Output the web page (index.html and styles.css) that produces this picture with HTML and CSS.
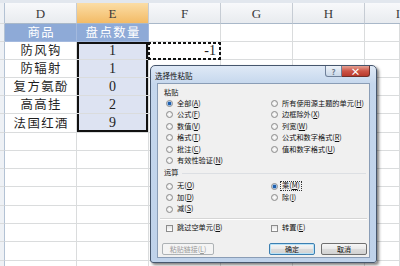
FILE: index.html
```html
<!DOCTYPE html>
<html lang="zh-CN">
<head>
    <meta charset="UTF-8">
    <title>选择性粘贴</title>
    <link rel="stylesheet" href="styles.css">
</head>
<body>

    <!-- Werkblad -->
    <div class="sheet">
        <div class="strip"></div>

        <div class="cell rh"></div>
        <div class="cell col">D</div>
        <div class="cell col on">E</div>
        <div class="cell col">F</div>
        <div class="cell col">G</div>
        <div class="cell col">H</div>
        <div class="cell col last-col">I</div>

        <div class="cell rh"></div>
        <div class="cell band">商品</div>
        <div class="cell band">盘点数量</div>
        <div class="cell"></div><div class="cell"></div><div class="cell"></div><div class="cell"></div>

        <div class="cell rh"></div>
        <div class="cell">防风钩</div>
        <div class="cell qty first">1</div>
        <div class="cell copy">-1</div>
        <div class="cell"></div><div class="cell"></div><div class="cell"></div>

        <div class="cell rh"></div>
        <div class="cell">防辐射</div>
        <div class="cell qty">1</div>
        <div class="cell"></div><div class="cell"></div><div class="cell"></div><div class="cell"></div>

        <div class="cell rh"></div>
        <div class="cell">复方氨酚</div>
        <div class="cell qty">0</div>
        <div class="cell"></div><div class="cell"></div><div class="cell"></div><div class="cell"></div>

        <div class="cell rh"></div>
        <div class="cell">高高挂</div>
        <div class="cell qty">2</div>
        <div class="cell"></div><div class="cell"></div><div class="cell"></div><div class="cell"></div>

        <div class="cell rh"></div>
        <div class="cell">法国红酒</div>
        <div class="cell qty last">9</div>
        <div class="cell"></div><div class="cell"></div><div class="cell"></div><div class="cell"></div>

        <div class="cell rh"></div><div class="cell"></div><div class="cell"></div><div class="cell"></div><div class="cell"></div><div class="cell"></div><div class="cell"></div>
        <div class="cell rh"></div><div class="cell"></div><div class="cell"></div><div class="cell"></div><div class="cell"></div><div class="cell"></div><div class="cell"></div>
        <div class="cell rh"></div><div class="cell"></div><div class="cell"></div><div class="cell"></div><div class="cell"></div><div class="cell"></div><div class="cell"></div>
        <div class="cell rh"></div><div class="cell"></div><div class="cell"></div><div class="cell"></div><div class="cell"></div><div class="cell"></div><div class="cell"></div>
        <div class="cell rh"></div><div class="cell"></div><div class="cell"></div><div class="cell"></div><div class="cell"></div><div class="cell"></div><div class="cell"></div>
        <div class="cell rh"></div><div class="cell"></div><div class="cell"></div><div class="cell"></div><div class="cell"></div><div class="cell"></div><div class="cell"></div>
        <div class="cell rh"></div><div class="cell"></div><div class="cell"></div><div class="cell"></div><div class="cell"></div><div class="cell"></div><div class="cell"></div>
        <div class="cell rh"></div><div class="cell"></div><div class="cell"></div><div class="cell"></div><div class="cell"></div><div class="cell"></div><div class="cell"></div>
    </div>

    <!-- Dialoogvenster -->
    <div class="dialog">
        <div class="titlebar">
            <span class="title">选择性粘贴</span>
            <div class="caption-btns">
                <span class="cbtn help">?</span>
                <span class="cbtn close">×</span>
            </div>
        </div>

        <div class="panel">
            <div class="group-label">粘贴</div>
            <div class="opts paste">
                <div class="opt"><span class="radio on"></span>全部(<u>A</u>)</div>
                <div class="opt"><span class="radio"></span>公式(<u>F</u>)</div>
                <div class="opt"><span class="radio"></span>数值(<u>V</u>)</div>
                <div class="opt"><span class="radio"></span>格式(<u>T</u>)</div>
                <div class="opt"><span class="radio"></span>批注(<u>C</u>)</div>
                <div class="opt"><span class="radio"></span>有效性验证(<u>N</u>)</div>
                <div class="opt"><span class="radio"></span>所有使用源主题的单元(<u>H</u>)</div>
                <div class="opt"><span class="radio"></span>边框除外(<u>X</u>)</div>
                <div class="opt"><span class="radio"></span>列宽(<u>W</u>)</div>
                <div class="opt"><span class="radio"></span>公式和数字格式(<u>R</u>)</div>
                <div class="opt"><span class="radio"></span>值和数字格式(<u>U</u>)</div>
            </div>

            <div class="group-label line">运算</div>
            <div class="opts ops">
                <div class="opt"><span class="radio"></span>无(<u>O</u>)</div>
                <div class="opt"><span class="radio"></span>加(<u>D</u>)</div>
                <div class="opt"><span class="radio"></span>减(<u>S</u>)</div>
                <div class="opt"><span class="radio on"></span><span class="focus">乘(<u>M</u>)</span></div>
                <div class="opt"><span class="radio"></span>除(<u>I</u>)</div>
            </div>

            <div class="separator"></div>

            <div class="checks">
                <div class="opt"><span class="checkbox"></span>跳过空单元(<u>B</u>)</div>
                <div class="opt"><span class="checkbox"></span>转置(<u>E</u>)</div>
            </div>

            <div class="buttons">
                <span class="btn disabled">粘贴链接(<u>L</u>)</span>
                <span class="btn default">确定</span>
                <span class="btn">取消</span>
            </div>
        </div>
    </div>

</body>
</html>
```

FILE: styles.css
```css
* {
    box-sizing: border-box;
}

body {
    margin: 0;
    width: 400px;
    height: 266px;
    overflow: hidden;
    position: relative;
    background-color: #fff;
    font-family: "Noto Sans CJK SC", sans-serif;
}

/* Werkblad */
.sheet {
    width: 400px;
    overflow: hidden;
    display: grid;
    grid-template-columns: 5px repeat(5, 72px) 35px;
    grid-template-rows: 3px 21px 18px 18px 18px 18px 18px 19px 18px 18px 18px 19px 18px 18px 19px 18px;
}

.strip {
    grid-column: 1 / -1;
    background-color: #e2e7ee;
}

.cell {
    border-right: 1px solid #dadcdd;
    border-bottom: 1px solid #dadcdd;
    display: flex;
    align-items: center;
    justify-content: center;
    font-size: 12.4px;
    letter-spacing: 1.4px;
    padding-left: 1.4px;
    line-height: 1;
    color: #1e1e1e;
    white-space: nowrap;
}

.rh {
    background-color: #eef1f5;
    border-right-color: #b3c2d4;
}

.col {
    background: linear-gradient(#f8f9fb, #e8ebef);
    border-right-color: #c6ccd4;
    border-bottom-color: #a9b8c9;
    font-family: "Liberation Serif", serif;
    font-size: 13px;
    letter-spacing: 0;
    padding-left: 0;
    color: #3a3a3a;
}

.col.on {
    background: linear-gradient(#fbdda6, #f3bb66);
}

.col.last-col {
    justify-content: flex-end;
    border-right: none;
}

.band {
    background-color: #8eaad7;
    color: #fff;
    border-right-color: #a3b9de;
    border-bottom-color: #a3b9de;
}

.qty {
    background-color: #dde3f2;
    font-family: "Liberation Serif", serif;
    font-size: 14px;
    letter-spacing: 0;
    padding-left: 0;
    box-shadow: inset 2px 0 #111, inset -2px 0 #111;
}

.qty.first {
    box-shadow: inset 2px 0 #111, inset -2px 0 #111, inset 0 2px #111;
}

.qty.last {
    box-shadow: inset 2px 0 #111, inset -2px 0 #111, inset 0 -2px #111;
}

/* kopieerkader (marching ants) */
.copy {
    position: relative;
    justify-content: flex-end;
    padding-left: 0;
    padding-right: 4px;
    letter-spacing: 0;
    font-family: "Liberation Serif", serif;
    font-size: 14px;
}

.copy::after {
    content: "";
    position: absolute;
    top: 0;
    left: -1px;
    right: -1px;
    bottom: -1px;
    background:
        repeating-linear-gradient(90deg, #111 0 3px, transparent 3px 5px) top / 100% 2px no-repeat,
        repeating-linear-gradient(90deg, #111 0 3px, transparent 3px 5px) bottom / 100% 2px no-repeat,
        repeating-linear-gradient(0deg, #111 0 3px, transparent 3px 5px) left / 2px 100% no-repeat,
        repeating-linear-gradient(0deg, #111 0 3px, transparent 3px 5px) right / 2px 100% no-repeat;
}

/* Dialoog */
.dialog {
    position: absolute;
    left: 150px;
    top: 65px;
    width: 227px;
    height: 198px;
    border: 1px solid #46566d;
    border-radius: 5px 5px 3px 3px;
    background: linear-gradient(#dfe9f6, #c5d7ed 18px, #bfd2ea);
    box-shadow: 2px 2px 3px rgba(0, 0, 0, 0.5);
    display: flex;
    flex-direction: column;
    font-size: 7.2px;
    color: #111;
}

.titlebar {
    height: 17px;
    display: flex;
    align-items: flex-start;
    padding-left: 4px;
}

.title {
    line-height: 19px;
    font-size: 7.5px;
}

.caption-btns {
    margin-left: auto;
    margin-right: 6px;
    display: flex;
}

.cbtn {
    height: 11px;
    display: flex;
    align-items: center;
    justify-content: center;
    border: 1px solid #6f8099;
    border-top: none;
}

.help {
    width: 17px;
    border-radius: 0 0 0 3px;
    background: linear-gradient(#eef3f9, #c9d7e8);
    color: #6f7b8c;
    font-size: 8px;
    font-weight: bold;
}

.close {
    width: 28px;
    border-left: none;
    border-color: #6e2f29;
    border-radius: 0 0 3px 0;
    background: linear-gradient(#e6a193, #cc5446 50%, #b8392c);
    color: #fff;
    font-size: 10px;
    font-weight: bold;
}

.panel {
    flex: 1;
    margin: 0 6px 5px;
    background-color: #f0f0f0;
    border: 1px solid #8a9db6;
    padding: 4px 1px 2px;
    display: flex;
    flex-direction: column;
}

.group-label {
    height: 9.5px;
    line-height: 9.5px;
    padding-left: 5px;
    display: flex;
    align-items: center;
}

.group-label.line {
    height: 10px;
    margin-top: 1.5px;
}

.group-label.line::after {
    content: "";
    flex: 1;
    height: 1px;
    margin: 0 2px 0 4px;
    background-color: #dcdfe3;
}

.opts {
    display: grid;
    grid-auto-flow: column;
    grid-template-columns: 105px 1fr;
    padding-left: 7px;
}

.paste {
    grid-template-rows: repeat(6, 11.5px);
}

.ops {
    margin-top: 2.25px;
    grid-template-rows: repeat(3, 11.5px);
}

.opt {
    display: flex;
    align-items: center;
    white-space: nowrap;
    line-height: 1;
}

.radio {
    flex: none;
    width: 7px;
    height: 7px;
    margin-right: 4px;
    border: 1px solid #8c8c8c;
    border-radius: 50%;
    background: radial-gradient(#ffffff, #dedede);
}

.radio.on {
    background: radial-gradient(circle, #1d5fae 0 1.4px, #9cc0e8 2px, #ffffff 3px);
}

.focus {
    outline: 1px dotted #333;
    outline-offset: 0;
    padding: 0 1px;
    margin-left: -1px;
}

.separator {
    height: 2px;
    margin: 3.25px 1px 0;
    border-top: 1px solid #d5d5d5;
    border-bottom: 1px solid #fff;
}

.checks {
    display: grid;
    grid-template-columns: 105px 1fr;
    height: 11px;
    margin-top: 2.5px;
    padding-left: 7px;
}

.checkbox {
    flex: none;
    width: 7px;
    height: 7px;
    margin-right: 4px;
    border: 1px solid #8c8c8c;
    background: linear-gradient(#e4e4e4, #fff);
}

.buttons {
    display: flex;
    gap: 6px;
    margin-top: 9.5px;
    padding: 0 1px 0 3px;
}

.btn {
    height: 12px;
    width: 46px;
    display: flex;
    align-items: center;
    justify-content: center;
    font-size: 7px;
    border: 1px solid #707070;
    border-radius: 2px;
    background: linear-gradient(#f6f6f6, #e9e9e9 50%, #dcdcdc 51%, #d2d2d2);
}

.btn.disabled {
    width: 52px;
    margin-right: auto;
    color: #9a9a9a;
    border-color: #adb2b5;
    background: #f4f4f4;
}

.btn.default {
    border-color: #3c7fb1;
    box-shadow: inset 0 0 0 1px #b8e2f7;
}
```
